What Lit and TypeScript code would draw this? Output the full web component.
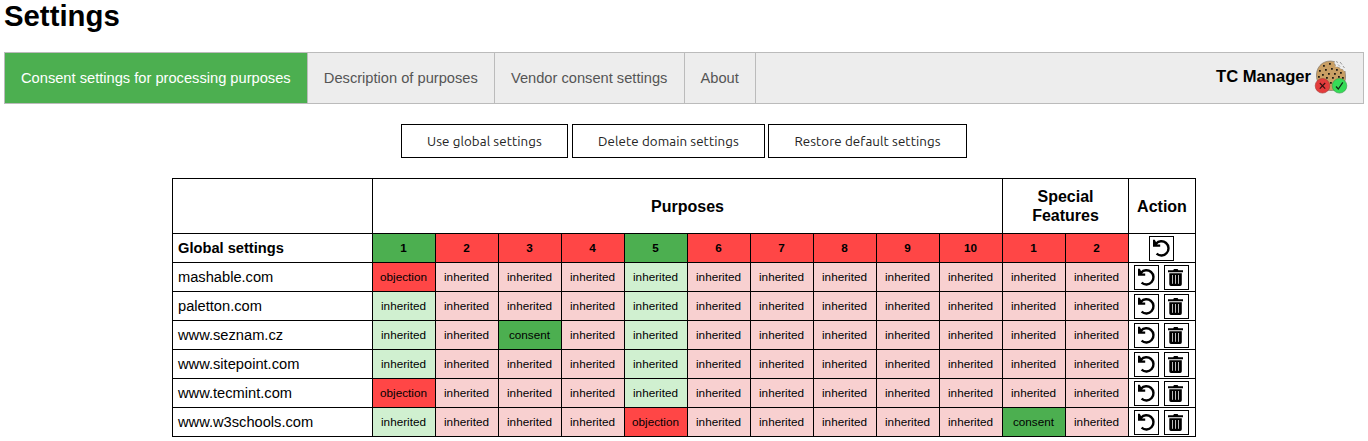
import { LitElement, html, css, svg } from "lit";
import { customElement } from "lit/decorators.js";
import { classMap } from "lit/directives/class-map.js";

const TABS = ["Consent settings for processing purposes", "Description of purposes", "Vendor consent settings", "About"];
const COLUMNS = ["1", "2", "3", "4", "5", "6", "7", "8", "9", "10", "1", "2"];
const GLOBAL_CONSENT = [0, 4];

const DOMAINS: { name: string; own: Record<number, "consent" | "objection"> }[] = [
  { name: "mashable.com", own: { 0: "objection" } },
  { name: "paletton.com", own: {} },
  { name: "www.seznam.cz", own: { 2: "consent" } },
  { name: "www.sitepoint.com", own: {} },
  { name: "www.tecmint.com", own: { 0: "objection" } },
  { name: "www.w3schools.com", own: { 4: "objection", 10: "consent" } },
];

@customElement("icon-button")
class IconButton extends LitElement {
  static properties = { kind: { type: String } };
  declare kind: string;

  static styles = css`
    :host { display: block; width: 25px; height: 25px; }
    button { display: block; box-sizing: border-box; width: 25px; height: 25px; padding: 0; border: 1px solid #000; background: #fff; }
    svg { display: block; }
  `;

  render() {
    const undo = svg`
      <path d="M6 6.700A7.100 7.100 0 1 1 6.600 16.600" fill="none" stroke="#000" stroke-width="2.400"/>
      <path d="M3 2.800H4.800L6.400 5.800L7.400 7.400H10.200V9.700H3Z" fill="#000"/>`;
    const trash = svg`
      <path d="M3 4.200H8.200L9 3H12.600L13.400 4.200H18V6.200H3ZM4.300 7.300H16.800V18.300Q16.800 20 15.100 20H6Q4.300 20 4.300 18.300Z" fill="#000"/>
      <path d="M7.500 9V17.800M10.500 9V17.800M13.500 9V17.800" stroke="#bbb" stroke-width="1"/>`;
    return html`<button><svg width="23" height="23" viewBox="0 0 23 23">${this.kind === "trash" ? trash : undo}</svg></button>`;
  }
}

@customElement("app-root")
class AppRoot extends LitElement {
  static styles = css`
    :host { display: block; box-sizing: border-box; height: 441px; overflow: hidden; padding: 0 4px; background: #fff; color: #000; font-family: "Liberation Sans", Arial, sans-serif; }
    h1 { margin: 0; padding-bottom: 21px; font-size: 29.33px; line-height: 31px; }
    nav { display: flex; box-sizing: border-box; height: 52px; border: 1px solid #bbb; background: #ededed; font-size: 14.667px; }
    .tab { display: flex; align-items: center; padding: 0 16.150px 1px 16px; border-right: 1px solid #bbb; color: #555; white-space: nowrap; }
    .tab.active { background: #4caf50; color: #fff; }
    .brand { display: flex; align-items: center; margin-left: auto; padding: 0 15px 3px 0; gap: 3px; font: bold 16.600px "Liberation Sans", Arial, sans-serif; }
    .brand svg { display: block; }
    .bulk { display: flex; justify-content: center; padding: 20px 0; }
    .bulk button { box-sizing: border-box; height: 34px; padding: 0; border: 1px solid #000; background: #fff; color: #222; font: 13.333px Ubuntu, "Noto Sans", sans-serif; letter-spacing: .08px; }
    .use { width: 167px; margin-right: 4px; }
    .delete { width: 193px; margin-right: 3px; }
    .restore { width: 199px; }
    .table { display: grid; box-sizing: border-box; width: 1024px; margin: 0 auto; padding: 1px; gap: 1px; background: #000; grid-template-columns: 199px repeat(12, 62px) 66px; grid-template-rows: 54px repeat(7, 28px); }
    .table > div { display: flex; align-items: center; justify-content: center; padding: 0 1px 1px 0; background: #fff; font-size: 11.733px; text-align: center; }
    .table > .head { padding: 0; font-size: 16px; line-height: 19px; font-weight: bold; }
    .purposes { grid-column: span 10; }
    .features { grid-column: span 2; }
    .table > .name { justify-content: flex-start; padding: 0 0 1px 5px; font-size: 14.667px; }
    .table > .bold { font-weight: bold; }
    .table > .yes { background: #4caf50; }
    .table > .no { background: #ff4646; }
    .table > .soft-yes { background: #d0f0d0; }
    .table > .soft-no { background: #f8d0d0; }
    .table > .actions { gap: 5px; align-items: flex-start; padding-top: 2px; }
  `;

  private cell(own: Record<number, string>, i: number) {
    const value = own[i];
    const inheritedYes = !value && GLOBAL_CONSENT.includes(i);
    return html`<div class=${classMap({
      yes: value === "consent",
      no: value === "objection",
      "soft-yes": inheritedYes,
      "soft-no": !value && !inheritedYes,
    })}>${value ?? "inherited"}</div>`;
  }

  private logo() {
    return html`<svg width="34" height="34" viewBox="0 0 34 34">
      <path d="M20.500 1.600C11-.8 3.200 5 2.500 14C1.800 23 8 30.500 17 30.500S32 24 31.500 16L31 11L28.500 9.500L26 8L23 6.500L21 5Z" fill="#c99f64" stroke="#8b8175" stroke-width=".8"/>
      <path d="M20.500 2.500L23 3.500L22.500 6L25.500 5.500L27 8L30 8.500L30.500 11" fill="none" stroke="#eee" stroke-width="1.600"/>
      <path d="M22 1.500L24 2.500M26 2L28 4.500M24 4.500L26 6.500M29 6L30.500 8" stroke="#999"/>
      <path d="M9 5h1.800v1.800h-1.800zM15 3h1.800v1.800h-1.800zM5 10h1.800v1.800h-1.800zM11 9h1.800v1.800h-1.800zM17 8h1.800v1.800h-1.800zM22 9h1.800v1.800h-1.800zM8 14h1.800v1.800h-1.800zM14 13h1.800v1.800h-1.800zM20 13h1.800v1.800h-1.800zM26 12h1.800v1.800h-1.800zM4 16h1.800v1.800h-1.800zM12 17h1.800v1.800h-1.800zM18 17h1.800v1.800h-1.800zM24 16h1.800v1.800h-1.800zM28 17h1.800v1.800h-1.800zM16 22h1.800v1.800h-1.800z" fill="#211b12"/>
      <circle cx="8.500" cy="25.800" r="7.300" fill="#e43c3c" stroke="#a33b35" stroke-width=".6"/>
      <path d="M5.800 23L11.200 28.600M11.200 23L5.800 28.600" stroke="#321010" stroke-width="1.100"/>
      <circle cx="25.500" cy="25.800" r="7.300" fill="#35dc57" stroke="#38974a" stroke-width=".6"/>
      <path d="M22 26.500L24.300 29L28.800 22.300" fill="none" stroke="#102c15" stroke-width="1.200"/>
    </svg>`;
  }

  render() {
    return html`
      <h1>Settings</h1>
      <nav>
        ${TABS.map((t, i) => html`<div class=${classMap({ tab: true, active: i === 0 })}>${t}</div>`)}
        <div class="brand"><span>TC Manager</span>${this.logo()}</div>
      </nav>
      <div class="bulk">
        <button class="use">Use global settings</button>
        <button class="delete">Delete domain settings</button>
        <button class="restore">Restore default settings</button>
      </div>
      <div class="table">
        <div></div>
        <div class="head purposes">Purposes</div>
        <div class="head features">Special<br>Features</div>
        <div class="head">Action</div>
        <div class="name bold">Global settings</div>
        ${COLUMNS.map((c, i) => html`<div class=${classMap({ bold: true, yes: GLOBAL_CONSENT.includes(i), no: !GLOBAL_CONSENT.includes(i) })}>${c}</div>`)}
        <div class="actions"><icon-button kind="undo"></icon-button></div>
        ${DOMAINS.map((d) => html`
          <div class="name">${d.name}</div>
          ${COLUMNS.map((_, i) => this.cell(d.own, i))}
          <div class="actions"><icon-button kind="undo"></icon-button><icon-button kind="trash"></icon-button></div>`)}
      </div>
    `;
  }
}
